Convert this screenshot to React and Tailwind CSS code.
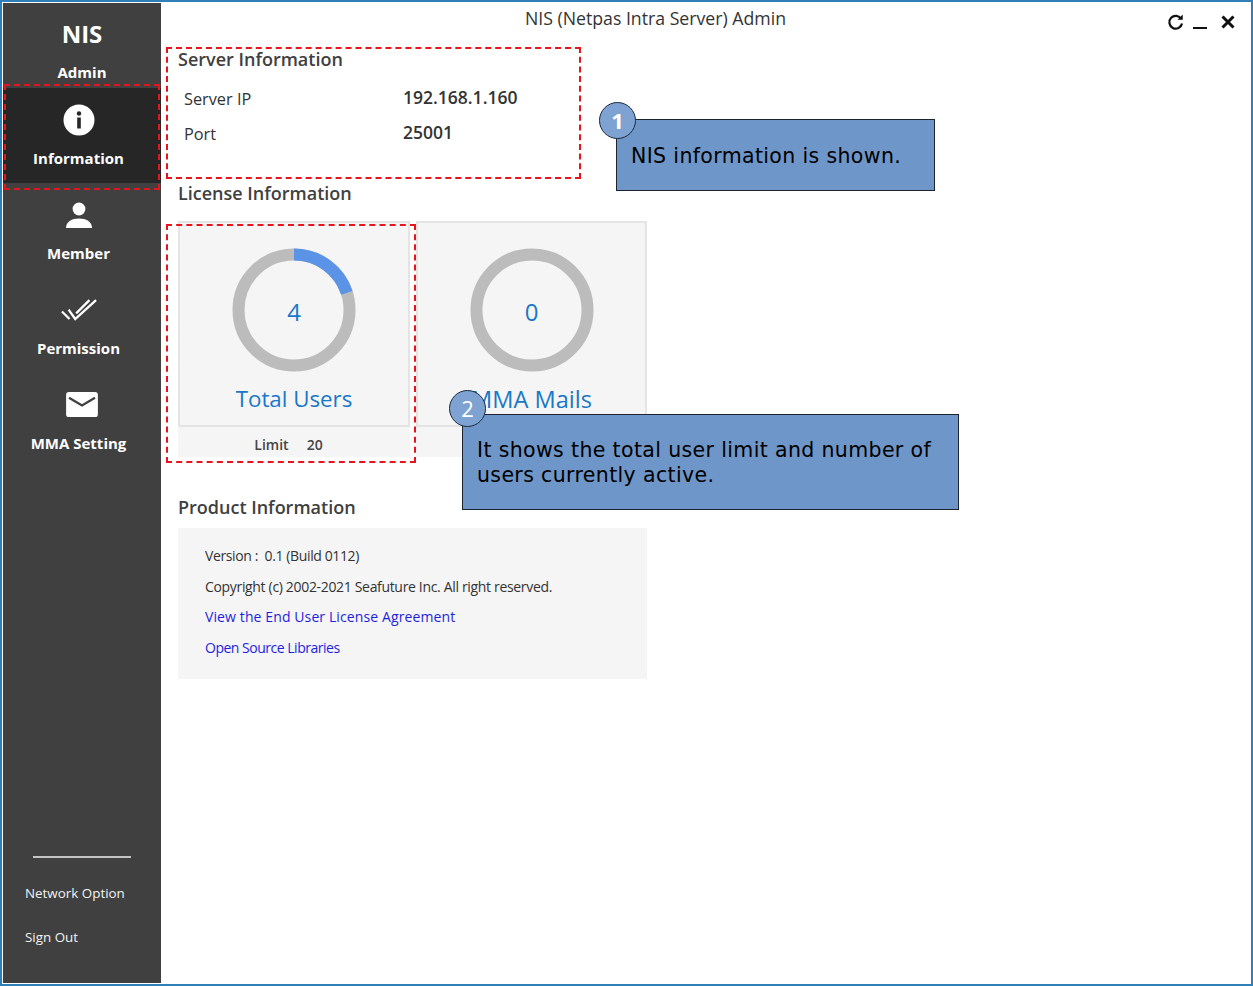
const sans = "font-['Open_Sans','Noto_Sans',sans-serif]";

function Ring({ value, arc }) {
  return (
    <div className="relative w-[124px] h-[124px]">
      <svg width="124" height="124" viewBox="0 0 124 124" className="block">
        <circle cx="62" cy="62" r="55.5" fill="none" stroke="#bcbcbc" strokeWidth="12" />
        {arc && <path d="M62 6.5 A55.5 55.5 0 0 1 114.8 44.9" fill="none" stroke="#5b93e6" strokeWidth="12" />}
      </svg>
      <div className="absolute inset-0 flex items-center justify-center text-[24px] text-[#1a78c8] pt-[4px]">{value}</div>
    </div>
  );
}

function NavItem({ icon, label, active }) {
  return (
    <div className={`h-[95px] flex flex-col items-center justify-start pt-[14px] pr-[7px] ${active ? "bg-[#262626]" : ""}`}>
      <div className="h-[36px] flex items-center justify-center">{icon}</div>
      <div className="mt-[10px] text-[15px] leading-[20px] font-bold text-white">{label}</div>
    </div>
  );
}

function Callout({ n, className, badgeClass, children }) {
  return (
    <div className={`absolute bg-[#6f96c8] border border-[#1c2430] text-black font-['DejaVu_Sans',sans-serif] text-[20.5px] tracking-[0.36px] leading-[25px] ${className}`}>
      {children}
      <div className={`absolute w-[37px] h-[37px] rounded-full bg-[#7ea3d2] border border-[#1c2c40] text-white flex items-center justify-center text-[22px] tracking-normal ${sans} ${badgeClass}`}>{n}</div>
    </div>
  );
}

export default function App() {
  return (
    <div className={`relative w-[1253px] h-[986px] bg-white border-[2px] border-[#2f7fb8] overflow-hidden text-[#333] ${sans}`}>
      <div className="flex h-full border-[1px] border-white">
        <aside className="w-[158px] shrink-0 bg-[#404040] flex flex-col">
          <div className="h-[85px] flex flex-col items-center text-white font-bold">
            <div className="text-[24px] leading-[32px] mt-[15px]">NIS</div>
            <div className="text-[15px] leading-[20px] mt-[12px]">Admin</div>
          </div>
          <div>
            <NavItem
              active
              label="Information"
              icon={
                <svg width="32" height="32" viewBox="0 0 32 32">
                  <circle cx="16" cy="16" r="15.5" fill="#fff" />
                  <circle cx="16" cy="9.5" r="2.2" fill="#262626" />
                  <rect x="14.2" y="13.5" width="3.6" height="11" fill="#262626" />
                </svg>
              }
            />
            <NavItem
              label="Member"
              icon={
                <svg width="28" height="28" viewBox="0 0 28 28">
                  <circle cx="14" cy="8" r="6.4" fill="#fff" />
                  <path d="M1 27c0-6.5 6-9.5 13-9.5s13 3 13 9.5z" fill="#fff" />
                </svg>
              }
            />
            <NavItem
              label="Permission"
              icon={
                <svg width="36" height="25" viewBox="0 0 38 26" fill="none" stroke="#fff" strokeWidth="2.4">
                  <path d="M1 14l8 8" />
                  <path d="M8 12l7 10L37 2" />
                  <path d="M16 16L30 2" />
                </svg>
              }
            />
            <NavItem
              label="MMA Setting"
              icon={
                <svg width="32" height="26" viewBox="0 0 33 27" className="ml-[6px]">
                  <rect width="33" height="26" rx="3" fill="#fff" />
                  <path d="M3 6l13.5 8L30 6" fill="none" stroke="#404040" strokeWidth="2.4" />
                </svg>
              }
            />
          </div>
          <div className="mt-auto pb-[36px] text-[13.4px] text-[#f2f2f2]">
            <div className="h-[2px] w-[98px] bg-[#c4c4c4] ml-[30px]" />
            <div className="mt-[25px] ml-[22px] leading-[20px] font-medium">Network Option</div>
            <div className="mt-[24px] ml-[22px] leading-[20px] font-medium">Sign Out</div>
          </div>
        </aside>

        <main className="flex-1 relative">
          <header className="h-[30px] flex items-start">
            <div className="flex-1 text-center text-[17.7px] leading-[24px] mt-[3px] pr-[100px] text-[#333]">
              NIS (Netpas Intra Server) Admin
            </div>
          </header>
          <div className="absolute right-[14px] top-[10px] flex items-center gap-[8px]">
            <svg width="18" height="18" viewBox="0 0 24 24" fill="none" stroke="#111" strokeWidth="3">
              <path d="M19 8a8.5 8.5 0 1 0 1 6" />
              <path d="M21 2v7h-7" fill="#111" stroke="none" />
            </svg>
            <div className="w-[14px] h-[2px] bg-[#111] mt-[11px]" />
            <svg width="16" height="16" viewBox="0 0 16 16" stroke="#111" strokeWidth="3" className="ml-[5px]">
              <path d="M2.5 2.5l11 11M13.5 2.5l-11 11" />
            </svg>
          </div>

          <div className="pl-[17px] w-[487px]">
            <h2 className="text-[18px] leading-[24px] font-semibold mt-[14px] text-[#404040]">Server Information</h2>
            <div className="ml-[6px] mt-[15px]">
              <div className="flex h-[35px] items-start">
                <span className="w-[219px] leading-[26px] text-[16.3px]">Server IP</span>
                <span className="font-semibold leading-[22px] text-[17.5px]">192.168.1.160</span>
              </div>
              <div className="flex h-[35px] items-start">
                <span className="w-[219px] leading-[26px] text-[16.3px]">Port</span>
                <span className="font-semibold leading-[22px] text-[17.5px]">25001</span>
              </div>
            </div>

            <h2 className="text-[18px] leading-[24px] font-semibold mt-[25px] text-[#404040]">License Information</h2>
            <div className="mt-[16px] flex gap-[6px] h-[236px]">
              <div className="w-[232px] bg-[#f5f5f5]">
                <div className="h-[206px] border-2 border-[#e4e4e4] flex flex-col items-center pt-[25px]">
                  <Ring value="4" arc />
                  <div className="text-[22.3px] leading-[32px] text-[#1a78c8] mt-[11px]">Total Users</div>
                </div>
                <div className="h-[30px] flex items-center justify-center text-[14px] font-semibold gap-[18px] text-[#444] pr-[11px] pt-[5px]">
                  <span>Limit</span>
                  <span>20</span>
                </div>
              </div>
              <div className="w-[231px] bg-[#f5f5f5]">
                <div className="h-[206px] border-2 border-[#e4e4e4] flex flex-col items-center pt-[25px]">
                  <Ring value="0" />
                  <div className="text-[23.6px] leading-[32px] text-[#1a78c8] mt-[11px]">MMA Mails</div>
                </div>
              </div>
            </div>

            <h2 className="text-[18px] leading-[24px] font-semibold mt-[38px] text-[#404040]">Product Information</h2>
            <div className="mt-[9px] bg-[#f5f5f5] h-[151px] w-[469px] pl-[27px] pt-[13px] text-[14px] leading-[30.5px]">
              <div className="tracking-[-0.38px]">Version :&nbsp; 0.1 (Build 0112)</div>
              <div className="tracking-[-0.33px]">Copyright (c) 2002-2021 Seafuture Inc. All right reserved.</div>
              <div className="tracking-[0.11px] text-[#1f1fe0]">View the End User License Agreement</div>
              <div className="tracking-[-0.49px] text-[#1f1fe0]">Open Source Libraries</div>
            </div>
          </div>
        </main>
      </div>

      {/* annotation overlays */}
      <div className="absolute left-[2px] top-[82px] w-[156px] h-[106px] border-2 border-dashed border-[#e8141c]" />
      <div className="absolute left-[164px] top-[45px] w-[415px] h-[132px] border-2 border-dashed border-[#e8141c]" />
      <div className="absolute left-[164px] top-[222px] w-[250px] h-[239px] border-2 border-dashed border-[#e8141c]" />

      <Callout n="1" className="left-[614px] top-[117px] w-[319px] h-[72px] pl-[14px] pt-[24px]" badgeClass="left-[-18px] top-[-18px] font-bold">
        NIS information is shown.
      </Callout>
      <Callout n="2" className="left-[460px] top-[412px] w-[497px] h-[96px] pl-[14px] pt-[23px]" badgeClass="left-[-14px] top-[-25px]">
        It shows the total user limit and number of<br />users currently active.
      </Callout>
    </div>
  );
}
